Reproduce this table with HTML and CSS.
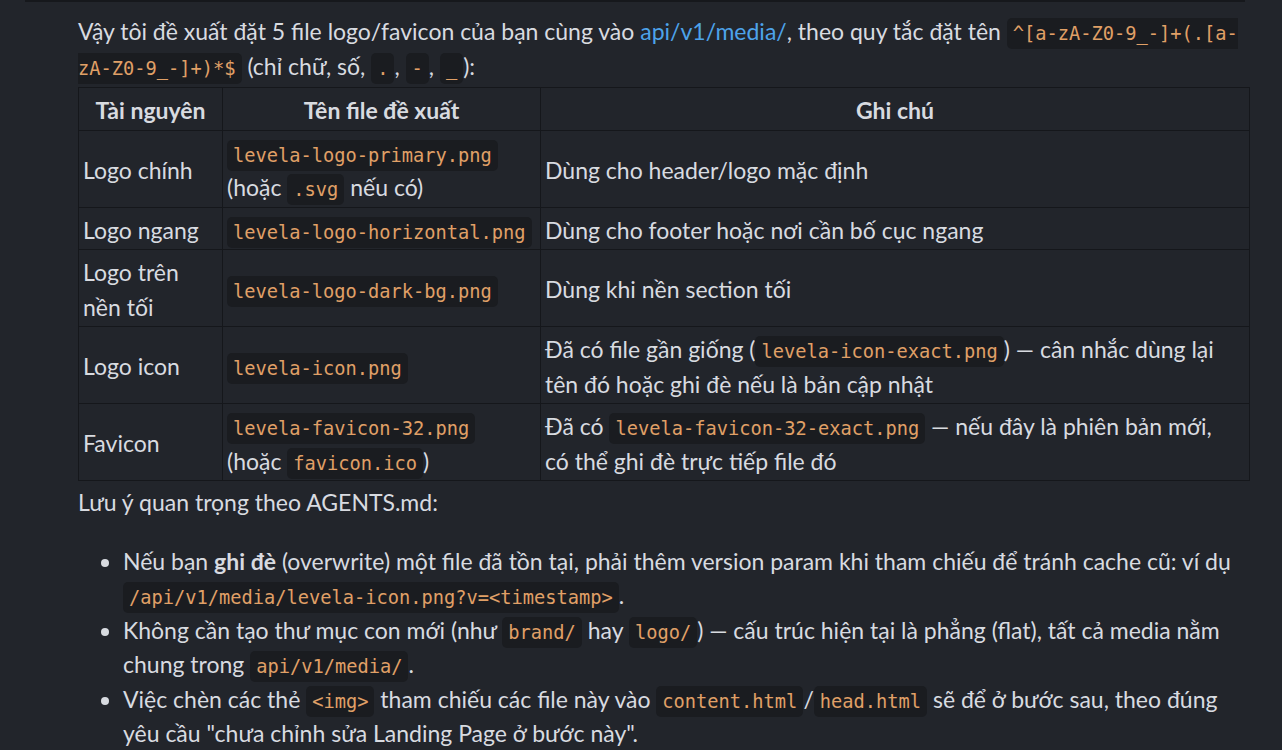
FILE: index.html
```html
<!DOCTYPE html>
<html lang="vi">
<head>
<meta charset="utf-8">
<title>Levela media</title>
<link rel="stylesheet" href="styles.css">
</head>
<body>
<div class="topbar"></div>
<main class="msg">
  <p class="intro">Vậy tôi đề xuất đặt 5 file logo/favicon của bạn cùng vào <a class="link" href="#">api/v1/media/</a>, theo quy tắc đặt tên <code>^[a-zA-Z0-9_-]+(.[a-zA-Z0-9_-]+)*$</code> (chỉ chữ, số, <code>.</code>, <code>-</code>, <code>_</code>):</p>
  <table class="tbl">
    <colgroup><col class="c1"><col class="c2"><col class="c3"></colgroup>
    <thead>
      <tr><th>Tài nguyên</th><th>Tên file đề xuất</th><th>Ghi chú</th></tr>
    </thead>
    <tbody>
      <tr><td>Logo chính</td><td><code>levela-logo-primary.png</code> (hoặc <code>.svg</code> nếu có)</td><td>Dùng cho header/logo mặc định</td></tr>
      <tr><td>Logo ngang</td><td><code>levela-logo-horizontal.png</code></td><td>Dùng cho footer hoặc nơi cần bố cục ngang</td></tr>
      <tr><td>Logo trên nền tối</td><td><code>levela-logo-dark-bg.png</code></td><td>Dùng khi nền section tối</td></tr>
      <tr><td>Logo icon</td><td><code>levela-icon.png</code></td><td>Đã có file gần giống (<code>levela-icon-exact.png</code>) — cân nhắc dùng lại tên đó hoặc ghi đè nếu là bản cập nhật</td></tr>
      <tr><td>Favicon</td><td><code>levela-favicon-32.png</code> (hoặc <code>favicon.ico</code>)</td><td>Đã có <code>levela-favicon-32-exact.png</code> — nếu đây là phiên bản mới, có thể ghi đè trực tiếp file đó</td></tr>
    </tbody>
  </table>
  <p class="note">Lưu ý quan trọng theo AGENTS.md:</p>
  <ul class="list">
    <li>Nếu bạn <strong>ghi đè</strong> (overwrite) một file đã tồn tại, phải thêm version param khi tham chiếu để tránh cache cũ: ví dụ <code>/api/v1/media/levela-icon.png?v=&lt;timestamp&gt;</code>.</li>
    <li>Không cần tạo thư mục con mới (như <code>brand/</code> hay <code>logo/</code>) — cấu trúc hiện tại là phẳng (flat), tất cả media nằm chung trong <code>api/v1/media/</code>.</li>
    <li>Việc chèn các thẻ <code>&lt;img&gt;</code> tham chiếu các file này vào <code>content.html</code>/<code>head.html</code> sẽ để ở bước sau, theo đúng yêu cầu "chưa chỉnh sửa Landing Page ở bước này".</li>
  </ul>
</main>
</body>
</html>
```
FILE: styles.css
```css
html, body {
  margin: 0;
  padding: 0;
  background: #22252b;
}
body {
  font-family: Lato, "Open Sans", sans-serif;
  font-size: 23px;
  color: #d8dbe0;
  overflow: hidden;
}
.topbar {
  height: 2px;
  margin: 0 37px 0 25px;
  background: #16181c;
}
.msg {
  padding: 12px 33px 0 78px;
}
p {
  margin: 0;
  line-height: 34.5px;
}
.intro {
  margin-bottom: 4px;
}
.link {
  color: #4da3ea;
  text-decoration: none;
}
code {
  font-family: "DejaVu Sans Mono", "Liberation Mono", monospace;
  font-size: 18.7px;
  line-height: 1;
  color: #e0a067;
  background: #1a1c20;
  border-radius: 5px;
  padding: 5px 6px;
}
.tbl code {
  white-space: nowrap;
}
.tbl {
  border-collapse: collapse;
  table-layout: fixed;
  width: 1172px;
  line-height: 34.5px;
}
.c1 { width: 144px; }
.c2 { width: 318px; }
.tbl th, .tbl td {
  border: 1px solid #15171b;
  padding: 5px 8px 2px 4px;
  vertical-align: middle;
}
.tbl td:nth-child(3) {
  padding-right: 10px;
}
.tbl th {
  font-weight: 700;
  text-align: center;
  padding-right: 4px;
}
.tbl td {
  text-align: left;
}
.note {
  margin: 4px 0 24px;
}
.list {
  margin: 0;
  padding-left: 45px;
  line-height: 34.5px;
}
strong {
  font-weight: 700;
}
```
